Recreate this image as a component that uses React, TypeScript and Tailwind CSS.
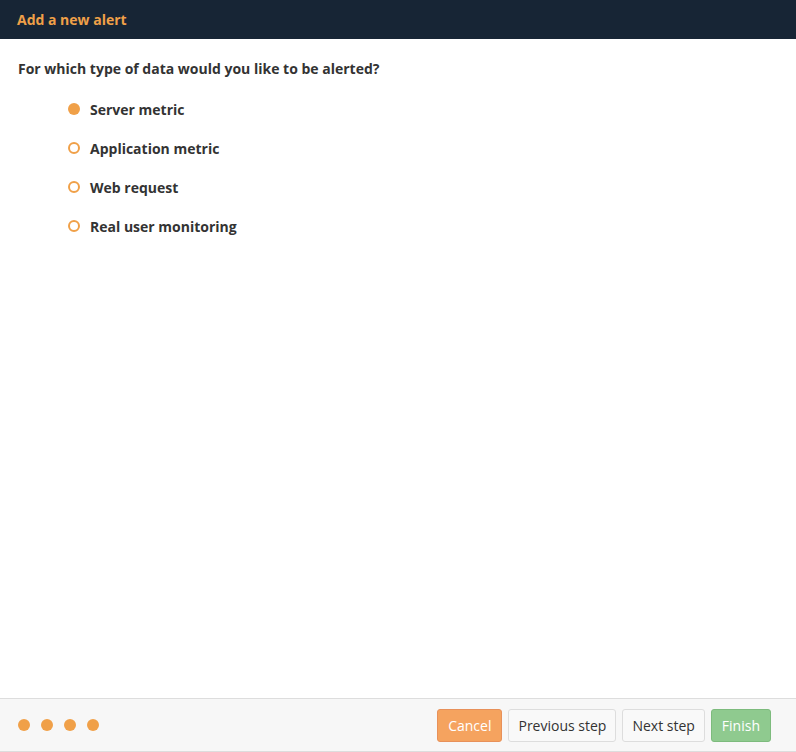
import React from "react";

const options = ["Server metric", "Application metric", "Web request", "Real user monitoring"];

export default function App() {
  return (
    <div className="w-[796px] h-[752px] flex flex-col bg-white text-[#333]" style={{ fontFamily: '"Open Sans", sans-serif' }}>
      <div className="h-[39px] bg-[#172535] flex items-center px-[17px]">
        <span className="text-[#f0a048] font-bold text-[14px]">Add a new alert</span>
      </div>
      <div className="flex-1 pt-[20px] px-[18px]">
        <div className="font-bold text-[14px] leading-[20px] text-[#333]">For which type of data would you like to be alerted?</div>
        <div className="flex flex-col gap-[19px] mt-[20px] pl-[50px]">
          {options.map((o, i) => (
            <div key={o} className="flex items-center h-[20px]">
              <span
                className={
                  i === 0
                    ? "w-[12px] h-[12px] rounded-full bg-[#f0a048] mr-[10px]"
                    : "w-[12px] h-[12px] rounded-full border-2 border-[#f0a048] mr-[10px]"
                }
              />
              <span className="font-bold text-[14px] text-[#333]">{o}</span>
            </div>
          ))}
        </div>
      </div>
      <div className="h-[54px] bg-[#f7f7f7] border-t border-b border-[#dddddd] flex items-center justify-between pl-[18px] pr-[25px]">
        <div className="flex gap-[11px]">
          {[0, 1, 2, 3].map((i) => (
            <span key={i} className="w-[12px] h-[12px] rounded-full bg-[#f0a048]" />
          ))}
        </div>
        <div className="flex gap-[6px] text-[14px]">
          <button className="h-[33px] px-[10px] rounded-[3px] bg-[#f5a35f] border border-[#e8915a] text-white">Cancel</button>
          <button className="h-[33px] px-[9px] rounded-[3px] bg-[#f9f9f9] border border-[#dddddd] text-[#333]">Previous step</button>
          <button className="h-[33px] px-[9px] rounded-[3px] bg-[#f9f9f9] border border-[#dddddd] text-[#333]">Next step</button>
          <button className="h-[33px] px-[10px] rounded-[3px] bg-[#8fca8f] border border-[#7dbb7d] text-white">Finish</button>
        </div>
      </div>
    </div>
  );
}
